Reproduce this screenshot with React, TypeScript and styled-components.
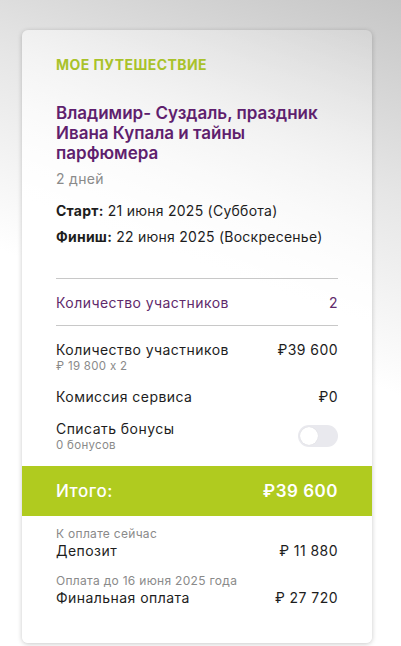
import React from "react";
import styled, { createGlobalStyle } from "styled-components";

const Global = createGlobalStyle`
  html, body { margin: 0; padding: 0; }
  body {
    width: 401px;
    min-height: 646px;
    font-family: Inter, "Noto Sans", sans-serif;
    color: #1d1d1d;
    background: linear-gradient(200deg, #c6c6c6 0%, #e6e6e6 25%, #ffffff 50%);
    overflow: hidden;
  }
`;

const Page = styled.div`
  padding: 30px 29px 3px 22px;
`;

const Card = styled.div`
  width: 350px;
  height: 613px;
  border-radius: 6px;
  background: linear-gradient(200deg, rgba(255,255,255,0.15) 0%, rgba(255,255,255,0.6) 22%, #ffffff 40%);
  box-shadow: 0 1px 5px rgba(0,0,0,0.22);
  display: flex;
  flex-direction: column;
  overflow: hidden;
`;

const Section = styled.div`
  padding: 0 34px;
  display: flex;
  flex-direction: column;
`;

const Eyebrow = styled.div`
  margin-top: 26px;
  font-size: 14px;
  font-weight: 700;
  color: #a9c22a;
  line-height: 17px;
  letter-spacing: 0.45px;
`;

const TripTitle = styled.div`
  margin-top: 30px;
  font-size: 17px;
  font-weight: 600;
  line-height: 20px;
  color: #5f1f6e;
`;

const Days = styled.div`
  margin-top: 7px;
  font-size: 14px;
  color: #8a8a8a;
  line-height: 17px;
  letter-spacing: 0.3px;
`;

const DateLine = styled.div<{ $mt: number }>`
  margin-top: ${(p) => p.$mt}px;
  font-size: 14px;
  line-height: 17px;
  color: #1d1d1d;
  letter-spacing: 0.25px;
  b { font-weight: 700; }
`;

const Divider = styled.div<{ $mt: number }>`
  margin-top: ${(p) => p.$mt}px;
  height: 1px;
  background: #c8c8c8;
`;

const Row = styled.div<{ $mt: number }>`
  margin-top: ${(p) => p.$mt}px;
  display: flex;
  justify-content: space-between;
  align-items: flex-start;
`;

const Col = styled.div`
  display: flex;
  flex-direction: column;
`;

const Label = styled.div<{ $purple?: boolean }>`
  font-size: 14px;
  line-height: 17px;
  letter-spacing: 0.45px;
  color: ${(p) => (p.$purple ? "#5f2a6b" : "#1d1d1d")};
`;

const Value = styled(Label)`
  text-align: right;
`;

const Sub = styled.div`
  margin-top: 1px;
  font-size: 11.5px;
  line-height: 15px;
  letter-spacing: 0.3px;
  color: #8a8a8a;
`;

const Toggle = styled.div`
  margin-top: 5px;
  width: 40px;
  height: 22px;
  border-radius: 11px;
  background: #e9e9ee;
  display: flex;
  align-items: center;
  padding: 0 2px;
  box-sizing: border-box;
`;

const Knob = styled.div`
  width: 18px;
  height: 18px;
  border-radius: 50%;
  background: #fff;
  box-shadow: 0 0 1px rgba(0,0,0,0.12);
`;

const TotalBar = styled.div`
  margin-top: 13px;
  height: 50px;
  background: #b0cb1f;
  display: flex;
  align-items: center;
  justify-content: space-between;
  padding: 0 34px;
  color: #fff;
  font-size: 17px;
  font-weight: 500;
  letter-spacing: 0.5px;
`;

const TotalValue = styled.span`
  font-weight: 600;
`;

const PayBlock = styled.div<{ $mt: number }>`
  margin-top: ${(p) => p.$mt}px;
  display: flex;
  flex-direction: column;
`;

const PayHint = styled.div`
  font-size: 12px;
  line-height: 14px;
  letter-spacing: 0.3px;
  color: #8a8a8a;
`;

export default function App() {
  return (
    <>
      <Global />
      <Page>
        <Card>
          <Section>
            <Eyebrow>МОЕ ПУТЕШЕСТВИЕ</Eyebrow>
            <TripTitle>
              Владимир- Суздаль, праздник Ивана Купала и тайны парфюмера
            </TripTitle>
            <Days>2 дней</Days>
            <DateLine $mt={15}>
              <b>Старт:</b> 21 июня 2025 (Суббота)
            </DateLine>
            <DateLine $mt={9}>
              <b>Финиш:</b> 22 июня 2025 (Воскресенье)
            </DateLine>
            <Divider $mt={33} />
            <Row $mt={15}>
              <Label $purple>Количество участников</Label>
              <Value $purple>2</Value>
            </Row>
            <Divider $mt={14} />
            <Row $mt={15}>
              <Col>
                <Label>Количество участников</Label>
                <Sub>₽ 19 800 x 2</Sub>
              </Col>
              <Value>₽39 600</Value>
            </Row>
            <Row $mt={14}>
              <Label>Комиссия сервиса</Label>
              <Value>₽0</Value>
            </Row>
            <Row $mt={15}>
              <Col>
                <Label>Списать бонусы</Label>
                <Sub>0 бонусов</Sub>
              </Col>
              <Toggle>
                <Knob />
              </Toggle>
            </Row>
          </Section>
          <TotalBar>
            <span>Итого:</span>
            <TotalValue>₽39 600</TotalValue>
          </TotalBar>
          <Section>
            <PayBlock $mt={11}>
              <PayHint>К оплате сейчас</PayHint>
              <Row $mt={1}>
                <Label>Депозит</Label>
                <Value>₽ 11 880</Value>
              </Row>
            </PayBlock>
            <PayBlock $mt={15}>
              <PayHint>Оплата до 16 июня 2025 года</PayHint>
              <Row $mt={1}>
                <Label>Финальная оплата</Label>
                <Value>₽ 27 720</Value>
              </Row>
            </PayBlock>
          </Section>
        </Card>
      </Page>
    </>
  );
}
